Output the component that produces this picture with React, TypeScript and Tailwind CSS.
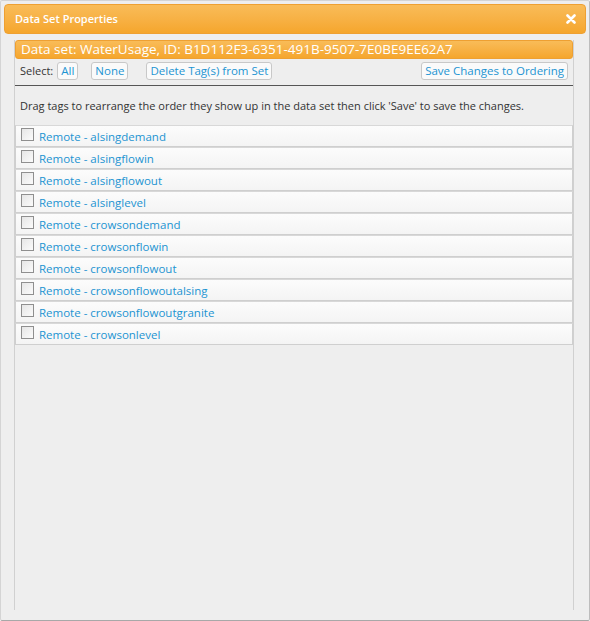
import React from "react";

const tags = [
    "alsingdemand",
    "alsingflowin",
    "alsingflowout",
    "alsinglevel",
    "crowsondemand",
    "crowsonflowin",
    "crowsonflowout",
    "crowsonflowoutalsing",
    "crowsonflowoutgranite",
    "crowsonlevel",
];

function SmallButton({children}: { children: React.ReactNode }) {
    return (
        <button
            className="h-[18px] px-[3px] rounded-[3px] border border-[#c8c8c8] bg-[#fafafa] text-[#1c94d2] text-[11.5px] leading-[16px]">
            {children}
        </button>
    );
}

export default function App() {
    return (
        <div className="w-[590px] h-[621px] bg-[#eeeeee] border border-[#d4d4d4] border-b-[#a8a8a8] border-r-[#bdbdbd] rounded-[2px] flex flex-col text-[#333]"
             style={{fontFamily: '"Open Sans", "DejaVu Sans", sans-serif'}}>
            {/* title bar */}
            <div
                className="mx-[3px] mt-[3px] h-[30px] rounded-[4px] border border-[#eea032] bg-gradient-to-b from-[#f9bc58] to-[#f5a62c] flex items-center justify-between pl-[10px] pr-[9px]">
                <span className="text-white text-[11px] font-semibold">Data Set Properties</span>
                <svg width="10" height="10" viewBox="0 0 10 10">
                    <path d="M1.5 1.5 L8.5 8.5 M8.5 1.5 L1.5 8.5" stroke="white" strokeWidth="2.6" strokeLinecap="round"/>
                </svg>
            </div>

            {/* content */}
            <div className="flex-1 ml-[13px] mr-[15px] mt-[6px] mb-[10px] border-l border-r border-[#d0d0d0] flex flex-col">
                <div
                    className="h-[19px] rounded-[3px] border border-[#eea032] bg-gradient-to-b from-[#f9bc58] to-[#f5a62c] flex items-center pl-[5px]">
                    <span className="text-white text-[13.5px] leading-[17px]">Data set: WaterUsage, ID: B1D112F3-6351-491B-9507-7E0BE9EE62A7</span>
                </div>

                <div className="flex items-start h-[27px] pt-[3px] pl-[5px] pr-[5px] border-b border-[#555]">
                    <span className="text-[11px] leading-[18px] mr-[4px]">Select:</span>
                    <SmallButton>All</SmallButton>
                    <span className="w-[13px]"/>
                    <SmallButton>None</SmallButton>
                    <span className="w-[18px]"/>
                    <SmallButton>Delete Tag(s) from Set</SmallButton>
                    <span className="flex-1"/>
                    <SmallButton>Save Changes to Ordering</SmallButton>
                </div>

                <div className="text-[11px] pl-[5px] pt-[12px] pb-[10px]">
                    Drag tags to rearrange the order they show up in the data set then click 'Save' to save the changes.
                </div>

                <div className="flex flex-col">
                    {tags.map((t) => (
                        <div key={t}
                             className="h-[22px] border border-[#cfcfcf] border-t-[#d8d8d8] bg-gradient-to-b from-[#fcfcfc] to-[#f4f4f4] flex items-center pl-[5px]">
                            <span
                                className="w-[13px] h-[13px] border border-[#8f8f8f] bg-gradient-to-br from-[#e6e6e6] to-[#fbfbfb] mr-[5px] -mt-[3px]"/>
                            <span className="text-[#1c94d2] text-[11.5px] mt-[2px]">Remote - {t}</span>
                        </div>
                    ))}
                </div>
            </div>
        </div>
    );
}
